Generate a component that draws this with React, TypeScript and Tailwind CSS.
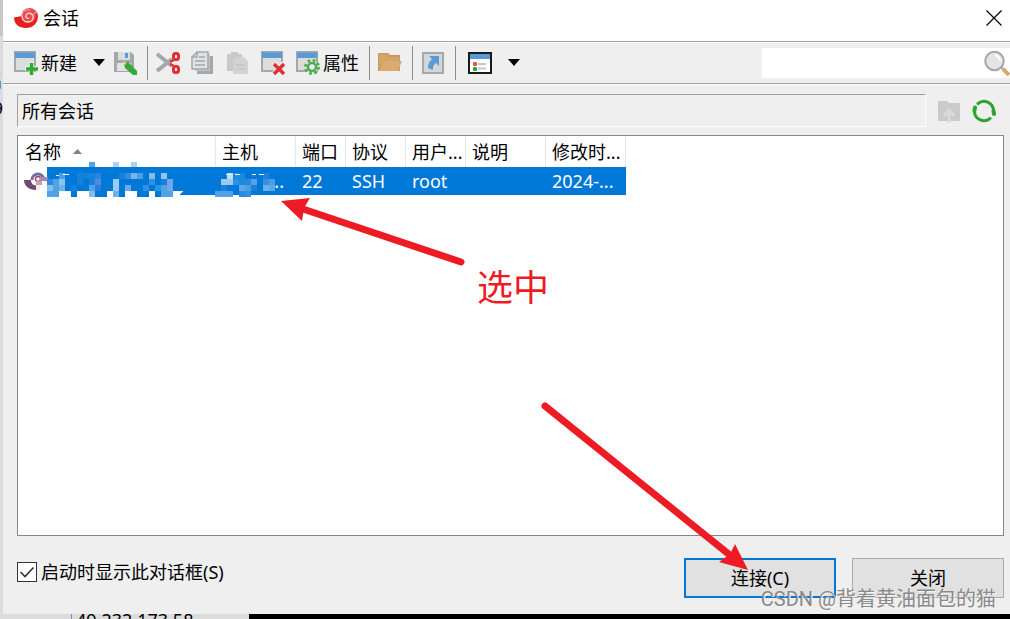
import clsx from 'clsx';
import React, { useState } from 'react';

const ACCENT = '#0078d7';

// [column, row, colour] of the pixelated blocks, six pixels each
const nameBlocks: [number, number, string][] = [
    [7, 0, '#4fa3e6'], [11, 0, '#a8d2f4'], [14, 0, '#a8d2f4'],
    [2, 2, '#4f9fe0'], [5, 2, '#0f84de'], [6, 2, '#0f84de'], [7, 2, '#1a80dc'], [8, 2, '#2a86dc'],
    [12, 2, '#1a80de'], [13, 2, '#3090e4'], [14, 2, '#78b4ec'], [15, 2, '#4a9ee6'], [17, 2, '#84bcee'], [19, 2, '#92c4f0'],
    [0, 3, '#2a8ade'], [1, 3, '#4fa3e6'], [2, 3, '#84c6f0'], [5, 3, '#1a7fdc'], [7, 3, '#1a7fdc'], [8, 3, '#4a8edc'],
    [11, 3, '#9ccbf2'], [17, 3, '#3090e4'], [19, 3, '#1a7fdc'], [20, 3, '#6fa8e8'],
    [0, 4, '#84bcee'], [1, 4, '#4fa3e6'], [2, 4, '#6ab4ea'], [4, 4, '#0f84de'], [7, 4, '#4fa3e6'], [8, 4, '#2a7edc'],
    [11, 4, '#9ccbf2'], [13, 4, '#6fa8e8'], [16, 4, '#3090e4'], [18, 4, '#2098e4'], [19, 4, '#4fa3e6'], [20, 4, '#6fa8e8'],
    [0, 5, '#4fa3e6'], [1, 5, '#4fa3e6'], [4, 5, ACCENT], [7, 5, '#84bcee'], [8, 5, ACCENT], [9, 5, ACCENT],
    [11, 5, '#6ab0ea'], [12, 5, ACCENT], [15, 5, ACCENT], [16, 5, ACCENT], [18, 5, ACCENT], [19, 5, '#4fa3e6'], [20, 5, '#4fa3e6'],
];

const hostBlocks: [number, number, string][] = [
    [30, 2, '#b8e0f8'], [31, 2, '#1a8ade'], [32, 2, '#1a8ade'], [36, 2, '#2080de'],
    [29, 3, '#9ccbf2'], [30, 3, '#9ccbf2'], [31, 3, '#3090e4'], [32, 3, '#1a8ade'], [33, 3, '#2a86dc'],
    [34, 3, '#5aa0e6'], [36, 3, '#3090e4'], [37, 3, '#4a9ee6'],
    [29, 4, '#1a80dc'], [32, 4, '#5aa8e8'], [33, 4, '#4a9ee6'], [34, 4, '#1a80dc'], [36, 4, '#6fb0ea'], [37, 4, '#5aa8e8'],
    [28, 5, '#4fa3e6'], [29, 5, '#4fa3e6'], [30, 5, '#4fa3e6'], [32, 5, '#2a8ade'], [33, 5, '#3090e4'],
];

const columns = [
    { title: '名称', className: 'w-[198px] pl-[7px]' },
    { title: '主机', className: 'w-[80px] pl-1.5' },
    { title: '端口', className: 'w-[50px] pl-1.5' },
    { title: '协议', className: 'w-[60px] pl-1.5' },
    { title: '用户...', className: 'w-[60px] pl-1.5' },
    { title: '说明', className: 'w-[80px] pl-1.5' },
    { title: '修改时...', className: 'w-[80px] pl-1.5' },
];

const Icon = ({ children }: { children: React.ReactNode }) => (
    <svg aria-hidden className="size-6 shrink-0" fill="none" viewBox="0 0 24 24">
        {children}
    </svg>
);

const WindowShape = () => (
    <>
        <path d="M1 1h20v19H1z" fill="#dcdcdc" stroke="#a3a8ab" strokeWidth="2" />
        <path d="M1 1h20v6H1z" fill="#5b9bd5" />
        <path d="M0 1h22" stroke="#a3a8ab" strokeWidth="1" />
    </>
);

const LogoIcon = () => (
    <svg aria-hidden className="h-5 w-6 shrink-0" fill="none" viewBox="0 0 24 20">
        <circle cx="15.500" cy="8" fill="#ea4b4b" r="8" />
        <path d="M0 9.500 8 8c0 4 3 7 6 7 5 0 8-4 8-8l1-3c3 8-2 16-11 16C5 20 0 16 0 9.500z" fill="#e3201f" />
        <path d="M8 8c0 4 3 6 6 6 4 0 6-3 5-6-1-3-5-4-7-1-1 2 1 4 3 3" stroke="#fbdada" strokeWidth="1.300" />
        <path d="M8 8c0-4 4-7 8-6M19 7l3-3" stroke="#f9c4c4" strokeWidth="0.800" />
    </svg>
);

const SessionIcon = () => (
    <svg aria-hidden className="h-[18px] w-6 shrink-0" viewBox="0 0 24 18">
        <path d="M0 8h7c0 4 3 6 6 5l-1 5C5 18 0 14 0 8z" fill="#74496f" />
        <path d="M8 8c0-4 3-6 6-6s6 3 6 6" fill="none" stroke="#6e6fa8" strokeWidth="3" />
        <circle cx="14" cy="7" fill="none" r="2.500" stroke="#a04a6a" strokeWidth="1.500" />
        <path d="M16 5h8v4h-8z" fill="#a48ab0" />
        <path d="M12 9h6v4h-6z" fill="#c3a0b4" />
        <path d="M12 13h4v5h-4z" fill="#fbeaea" />
    </svg>
);

const CaretIcon = () => (
    <svg aria-hidden className="h-[7px] w-3" viewBox="0 0 12 7">
        <path d="M0 0h12L6 7z" fill="#000" />
    </svg>
);

const NewIcon = () => (
    <Icon>
        <WindowShape />
        <path d="M17.500 11v13M11 17.500h13" stroke="#efefef" strokeWidth="5" />
        <path d="M17.500 12v12M12 18h12" stroke="#2eab2e" strokeWidth="3.500" />
    </Icon>
);

const SaveIcon = () => (
    <Icon>
        <path d="M1 1h17l3 3v17H1z" fill="#a3a8ab" />
        <path d="M5 1h12v8H5z" fill="#dcdcdc" />
        <path d="M12 2h3v5h-3z" fill="#5b9bd5" />
        <path d="M4 12h14v8H4z" fill="#e2e2e2" />
        <path d="m11 12 4-1 9 9v4h-4l-8-7z" fill="#35a835" />
        <path d="m10 11 3 2" stroke="#e8d28a" strokeWidth="2" />
    </Icon>
);

const CutIcon = () => (
    <Icon>
        <path d="m1 3 15 12M1 20 16 8" stroke="#a3a8ab" strokeWidth="4" />
        <rect height="6" rx="2" stroke="#e03038" strokeWidth="3" width="5" x="17.500" y="2.500" />
        <rect height="6" rx="2" stroke="#e03038" strokeWidth="3" width="5" x="17.500" y="15.500" />
        <path d="m14 11 4-2M14 13l4 2" stroke="#e03038" strokeWidth="2" />
    </Icon>
);

const CopyIcon = () => (
    <Icon>
        <path d="M6 5h16v18H6z" fill="#a3a8ab" />
        <path d="M4 3h15v17H4z" fill="#c4c6c8" />
        <path d="M6 1h11v17H1V6z" fill="#dfe1e2" stroke="#a3a8ab" strokeWidth="1.500" />
        <path d="M1 6h5V1M4 10h10M4 14h10M8 6h6" stroke="#a3a8ab" strokeWidth="1.500" />
    </Icon>
);

const PasteIcon = () => (
    <Icon>
        <path d="M1 3h4V1h7v2h4v17H1z" fill="#c9c9c9" />
        <path d="M11 6h7l4 4v13H7V10z" fill="#d3d3d3" />
        <path d="M10 14h9M10 18h9" stroke="#c6c6c6" strokeWidth="1.500" />
    </Icon>
);

const DeleteIcon = () => (
    <Icon>
        <WindowShape />
        <path d="m13 12 10 11M23 12 13 23" stroke="#efefef" strokeWidth="5" />
        <path d="m13 13 10 10M23 13 13 23" stroke="#e03038" strokeWidth="3.500" />
    </Icon>
);

const PropertiesIcon = () => (
    <Icon>
        <WindowShape />
        <circle cx="16" cy="16" fill="#efefef" r="6" />
        <circle cx="16" cy="16" r="6.500" stroke="#4cae4c" strokeDasharray="2.550 2.550" strokeWidth="3" />
        <circle cx="16" cy="16" r="4" stroke="#4cae4c" strokeWidth="2.500" />
    </Icon>
);

const FolderIcon = () => (
    <Icon>
        <path d="M0 2h10l2 2h10v16H0z" fill="#c8975c" />
        <path d="M1 3h8l2 3h10v4H6L1 18z" fill="#d4a469" />
        <path d="M6 10h18l-4 10H1z" fill="#d9ab70" />
    </Icon>
);

const ShortcutIcon = () => (
    <Icon>
        <path d="M2 2h20v20H2z" fill="#d4d6d8" stroke="#a3a8ab" strokeWidth="2" />
        <path d="M8 5h10v10l-3-3c-3 2-3 4-3 7l-5-2c0-4 1-6 4-9z" fill="#5b9bd5" />
    </Icon>
);

const ViewIcon = () => (
    <Icon>
        <path d="M1 2h22v20H1z" fill="#fff" stroke="#1a1a1a" strokeWidth="2" />
        <path d="M2 3h20v5H2z" fill="#5b9bd5" />
        <path d="M10 13h8M10 17.500h8" stroke="#c4c6c8" strokeWidth="2" />
        <rect fill="#e85058" height="4" rx="1" width="4" x="5" y="11" />
        <rect fill="#2eab2e" height="4" rx="1" width="4" x="5" y="16" />
    </Icon>
);

const SearchIcon = () => (
    <svg aria-hidden className="h-[26px] w-[26px] shrink-0" fill="none" viewBox="0 0 26 26">
        <circle cx="10.500" cy="11" fill="#e4e5e6" r="9.250" stroke="#a3a7aa" strokeWidth="2" />
        <path d="M11 5c3 1 5 3 5 6" stroke="#fff" strokeWidth="2" />
        <path d="m17 17 3 3" stroke="#a3a8ab" strokeWidth="2" />
        <path d="m19 19 6 6" stroke="#d9ab70" strokeWidth="4" />
    </svg>
);

const FolderUpIcon = () => (
    <Icon>
        <path d="M1 2h9l2 2h11v18H1z" fill="#cacaca" />
        <path d="M12 24V13M7 17l5-6 5 6" stroke="#dadada" strokeWidth="3" />
    </Icon>
);

const RefreshIcon = () => (
    <Icon>
        <path d="M6 4.500A9.500 9.500 0 0 1 21.500 12M18 19.500A9.500 9.500 0 0 1 2.500 12" stroke="#2ea32e" strokeLinecap="round" strokeWidth="3" />
        <path d="M3 8.500l-.500 3M21.500 12l.500 3" stroke="#2ea32e" strokeLinecap="round" strokeWidth="4" />
    </Icon>
);

const ToolButton = ({ label, icon, text }: { label: string; icon: React.ReactNode; text?: string }) => (
    <button aria-label={label} className="flex shrink-0 items-center gap-[3px]" title={label} type="button">
        {icon}
        {text}
    </button>
);

const Separator = () => <div className="mr-2 ml-2.5 h-[34px] w-px shrink-0 bg-[#8c8c8c]" />;

const Mosaic = () => (
    <svg
        aria-hidden
        className="pointer-events-none absolute -top-[5px] left-0 h-9 w-[280px]"
        shapeRendering="crispEdges"
        viewBox="0 0 280 36"
    >
        <path d="M29 29h118l-8 4H29zM140 29h8l-4 4h-4zM225 33l2-4h6v2l-4 2z" fill="#fff" />
        {[...nameBlocks, ...hostBlocks].map(([column, row, colour]) => (
            <rect
                fill={colour}
                height={row === 0 ? 5 : 6}
                key={`${column}-${row}`}
                width={6}
                x={29 + column * 6}
                y={row === 0 ? 0 : row * 6 - 1}
            />
        ))}
        <path d="M155 29h11l-5 4h-6z" fill="#fff" />
        <path d="M38 13h3M45 13l2-1h4M208 13l2-1h3M217 12h5M234 12h4M241 12h5" stroke="#fff" />
    </svg>
);

const Toolbar = () => (
    <div className="flex h-[43px] items-center border-y border-[#a0a0a0] pl-[11px] shadow-[0_1px_0_#fff,inset_0_1px_0_#fff]">
        <ToolButton icon={<NewIcon />} label="新建" text="新建" />
        <button aria-label="新建选项" className="mr-2 ml-4 shrink-0" type="button">
            <CaretIcon />
        </button>
        <ToolButton icon={<SaveIcon />} label="保存" />
        <Separator />
        <div className="flex gap-[11px]">
            <ToolButton icon={<CutIcon />} label="剪切" />
            <ToolButton icon={<CopyIcon />} label="复制" />
            <ToolButton icon={<PasteIcon />} label="粘贴" />
            <ToolButton icon={<DeleteIcon />} label="删除" />
            <ToolButton icon={<PropertiesIcon />} label="属性" text="属性" />
        </div>
        <Separator />
        <ToolButton icon={<FolderIcon />} label="打开文件夹" />
        <Separator />
        <ToolButton icon={<ShortcutIcon />} label="快捷方式" />
        <Separator />
        <div className="ml-1 flex items-center gap-4">
            <ToolButton icon={<ViewIcon />} label="视图" />
            <button aria-label="视图选项" type="button">
                <CaretIcon />
            </button>
        </div>
        <div className="ml-auto flex h-[30px] w-[248px] items-center bg-white">
            <input aria-label="搜索" className="h-full min-w-0 flex-1 px-1 outline-none" type="text" />
            <SearchIcon />
        </div>
    </div>
);

const SessionTable = () => (
    <table className="w-[608px] table-fixed border-separate border-spacing-0 text-left">
        <thead>
            <tr className="h-[31px]">
                {columns.map(({ title, className }, i) => (
                    <th
                        className={clsx('border-r border-[#e5e5e5] py-0 pr-0 font-normal whitespace-nowrap', className)}
                        key={title}
                    >
                        {title}
                        {i === 0 && (
                            <svg aria-hidden className="mb-1 ml-3 inline h-[5px] w-[9px]" viewBox="0 0 9 5">
                                <path d="M0 5h9L4.500 0z" fill="#838383" />
                            </svg>
                        )}
                    </th>
                ))}
            </tr>
        </thead>
        <tbody>
            <tr className="h-7 bg-[#0078d7] text-white">
                <td className="relative p-0">
                    <div className="flex h-7 w-[29px] items-center bg-white pl-1.5">
                        <SessionIcon />
                    </div>
                    <Mosaic />
                </td>
                <td className="py-0 pr-3 pl-1.5 text-right">...</td>
                <td className="py-0 pr-0 pl-1.5">22</td>
                <td className="py-0 pr-0 pl-1.5">SSH</td>
                <td className="py-0 pr-0 pl-1.5">root</td>
                <td className="p-0" />
                <td className="py-0 pr-0 pl-1.5 whitespace-nowrap">2024-...</td>
            </tr>
        </tbody>
    </table>
);

const Annotations = () => (
    <div className="pointer-events-none absolute inset-0 text-[#ed1c24]">
        <svg aria-hidden className="h-[619px] w-[1010px]" viewBox="0 0 1010 619">
            <path d="M461 262 300 208M545 406 736 560" stroke="currentColor" strokeLinecap="round" strokeWidth="7" />
            <path d="m281 201 29-3-6 10-2 13zM748 570l-13-26-5 10-11 8z" fill="currentColor" />
        </svg>
        <span className="absolute top-[268px] left-[477px] text-[36px] leading-10">选中</span>
    </div>
);

export default function App() {
    const [showOnStartup, setShowOnStartup] = useState(true);

    return (
        <div className="relative flex min-h-screen flex-col overflow-hidden bg-[#dcdcdc] font-['Noto_Sans','Noto_Sans_CJK_SC',sans-serif] text-[18px] leading-6 text-black">
            <div className="flex flex-1">
                <div className="flex w-[3px] shrink-0 flex-col items-end overflow-hidden bg-[#dcdcdc]">
                    <div className="h-9 w-full bg-[#c8c8c8]" />
                    <span className="mt-8">名</span>
                    <span className="mt-1">9</span>
                </div>
                <main className="flex min-w-0 flex-1 flex-col bg-[#efefef]">
                    <header className="flex h-[41px] shrink-0 items-center justify-between bg-white pr-2 pl-[11px]">
                        <h1 className="flex items-center gap-[5px] pb-1.5">
                            <LogoIcon />
                            会话
                        </h1>
                        <button aria-label="关闭窗口" className="pb-1.5" type="button">
                            <svg aria-hidden className="size-4" viewBox="0 0 16 16">
                                <path d="m.5.5 15 15M15.500.5l-15 15" stroke="#000" strokeWidth="1.200" />
                            </svg>
                        </button>
                    </header>
                    <Toolbar />
                    <div className="flex flex-1 flex-col pt-2.5 pr-1.5 pb-4 pl-3.5">
                        <div className="flex items-center">
                            <input
                                aria-label="位置"
                                className="h-[33px] min-w-0 flex-1 border border-t-[#a0a0a0] border-r-white border-b-white border-l-[#a0a0a0] bg-transparent px-1 pb-0.5 outline-none"
                                readOnly
                                type="text"
                                value="所有会话"
                            />
                            <div className="flex gap-[11px] pr-2 pl-[11px]">
                                <ToolButton icon={<FolderUpIcon />} label="上一级" />
                                <ToolButton icon={<RefreshIcon />} label="刷新" />
                            </div>
                        </div>
                        <div className="mt-2 flex-1 border border-[#828790] bg-white">
                            <SessionTable />
                        </div>
                        <footer className="mt-[22px] flex items-start">
                            <label className="flex h-7 items-center gap-1">
                                <span className="grid size-5">
                                    <input
                                        checked={showOnStartup}
                                        className="col-start-1 row-start-1 size-5 appearance-none border border-[#333] bg-white"
                                        onChange={(e) => setShowOnStartup(e.target.checked)}
                                        type="checkbox"
                                    />
                                    {showOnStartup && (
                                        <svg
                                            aria-hidden
                                            className="pointer-events-none col-start-1 row-start-1 size-5"
                                            fill="none"
                                            viewBox="0 0 20 20"
                                        >
                                            <path d="m3.500 10 4.500 4.500 8.500-9" stroke="#333" strokeWidth="1.600" />
                                        </svg>
                                    )}
                                </span>
                                启动时显示此对话框(S)
                            </label>
                            <div className="ml-auto flex gap-4">
                                <button className="h-10 w-[152px] border-2 border-[#0078d7] bg-[#e1e1e1]" type="button">
                                    连接(C)
                                </button>
                                <button className="h-10 w-[152px] border border-[#adadad] bg-[#e1e1e1]" type="button">
                                    关闭
                                </button>
                            </div>
                        </footer>
                    </div>
                </main>
            </div>
            <div className="flex h-[5px] shrink-0 overflow-hidden bg-black">
                <div className="flex w-[249px] items-start bg-[#dcdcdc] pl-[71px]">
                    <span className="-mt-1.5 border-l border-[#8c8c8c] pl-1">49.232.173.58</span>
                </div>
            </div>
            <Annotations />
            <span className="pointer-events-none absolute right-3.5 bottom-2 font-[Roboto,'Noto_Sans_CJK_SC',sans-serif] text-[20px] text-[#8a8a8a] [text-shadow:1px_1px_0_#f4f4f4]">
                CSDN @背着黄油面包的猫
            </span>
        </div>
    );
}
